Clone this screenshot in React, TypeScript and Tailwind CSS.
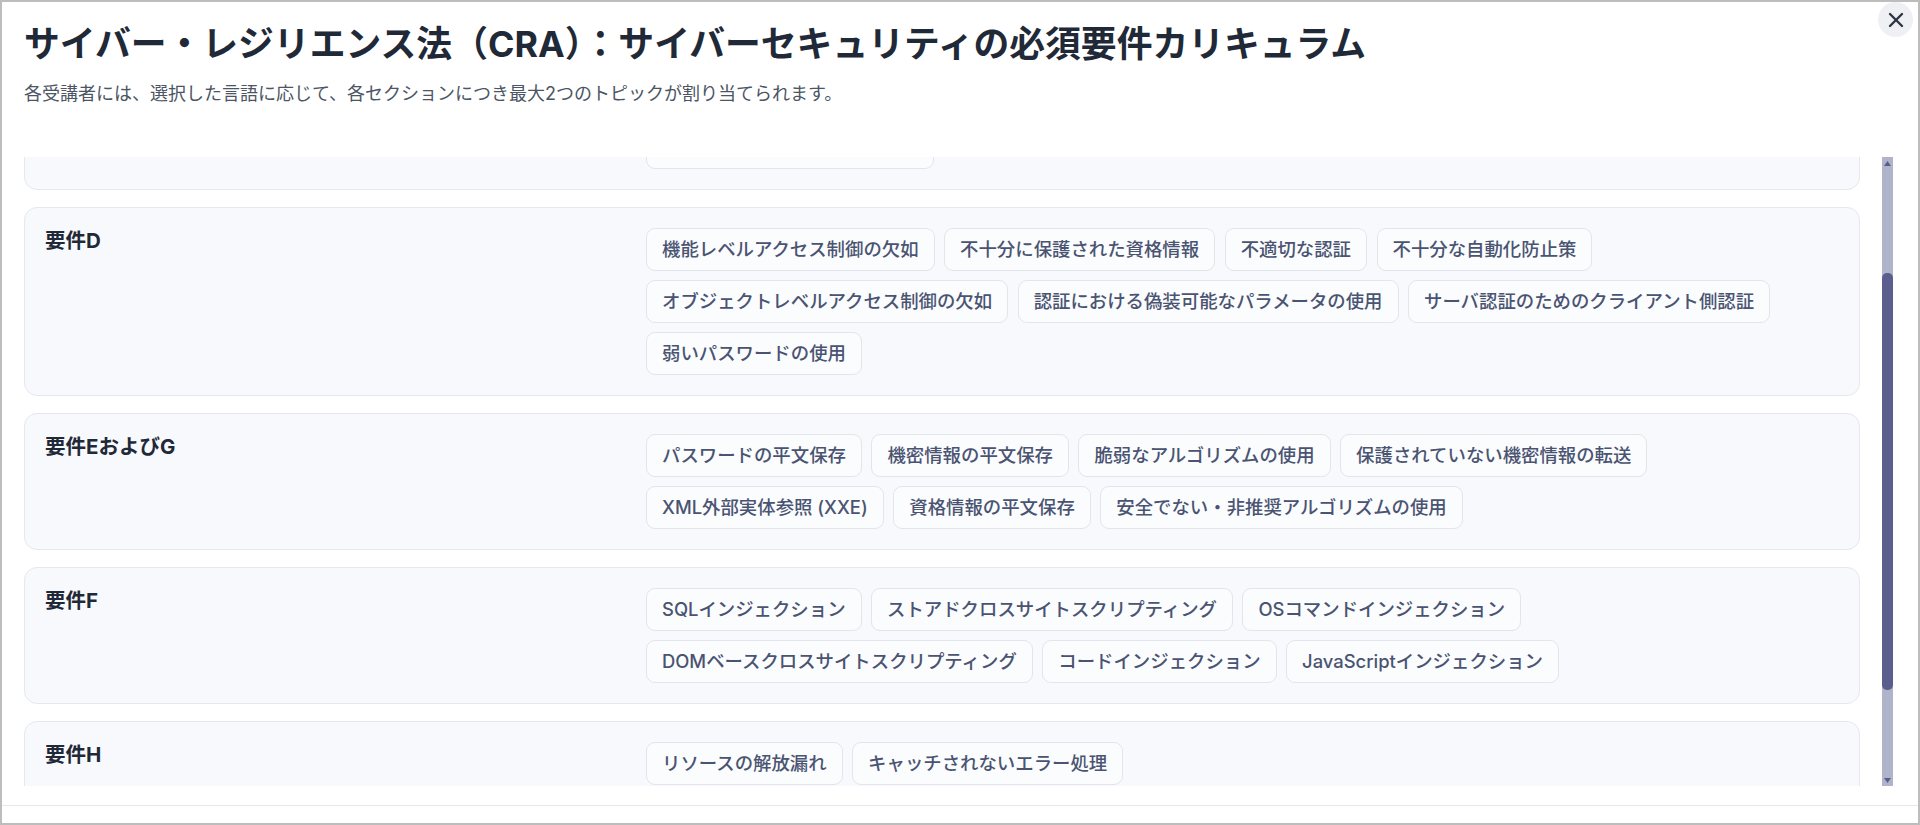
import React, { useLayoutEffect, useRef } from "react";
import { X } from "lucide-react";

type Section = { label: string; chips: string[] };

const sections: Section[] = [
  {
    label: "要件BおよびC",
    chips: [
      "サーバサイドリクエストフォージェリ (SSRF)",
      "パストラバーサル",
      "安全でないデシリアライゼーション",
      "オープンリダイレクト",
      "クロスサイトリクエストフォージェリ",
      "不適切な入力検証",
      "ファイルアップロードの不備",
      "クリックジャッキング",
      "不適切なエラーメッセージ処理",
    ],
  },
  {
    label: "要件D",
    chips: [
      "機能レベルアクセス制御の欠如",
      "不十分に保護された資格情報",
      "不適切な認証",
      "不十分な自動化防止策",
      "オブジェクトレベルアクセス制御の欠如",
      "認証における偽装可能なパラメータの使用",
      "サーバ認証のためのクライアント側認証",
      "弱いパスワードの使用",
    ],
  },
  {
    label: "要件EおよびG",
    chips: [
      "パスワードの平文保存",
      "機密情報の平文保存",
      "脆弱なアルゴリズムの使用",
      "保護されていない機密情報の転送",
      "XML外部実体参照 (XXE)",
      "資格情報の平文保存",
      "安全でない・非推奨アルゴリズムの使用",
    ],
  },
  {
    label: "要件F",
    chips: [
      "SQLインジェクション",
      "ストアドクロスサイトスクリプティング",
      "OSコマンドインジェクション",
      "DOMベースクロスサイトスクリプティング",
      "コードインジェクション",
      "JavaScriptインジェクション",
    ],
  },
  {
    label: "要件H",
    chips: ["リソースの解放漏れ", "キャッチされないエラー処理"],
  },
];

function Card({ section, cardRef }: { section: Section; cardRef?: React.Ref<HTMLDivElement> }) {
  return (
    <div
      ref={cardRef}
      className="grid grid-cols-3 gap-x-[9px] rounded-[13px] border border-[#e6e8ee] bg-[#f8f9fc] p-5"
    >
      <div className="text-[20.5px] font-bold leading-[26px] text-[#1f2937]">{section.label}</div>
      <div className="col-span-2 flex flex-wrap gap-x-[9.5px] gap-y-[9px]">
        {section.chips.map((c) => (
          <span
            key={c}
            className="rounded-[9px] border border-[#e2e5ec] bg-[#fbfcfd] px-[15px] py-[8px] text-[18.4px] font-medium leading-[25px] text-[#4a5472]"
          >
            {c}
          </span>
        ))}
      </div>
    </div>
  );
}

function FakeScrollbar() {
  return (
    <div className="flex h-full w-[11px] shrink-0 flex-col bg-[#b1b3ca]">
      <div className="flex h-[12px] items-center justify-center">
        <svg width="7" height="5" viewBox="0 0 7 5">
          <polygon points="3.5,0 7,5 0,5" fill="#5a5e8c" />
        </svg>
      </div>
      <div className="mt-[104px] h-[417px] rounded-[5px] bg-[#5a5e8c]" />
      <div className="flex-1" />
      <div className="flex h-[12px] items-center justify-center">
        <svg width="7" height="5" viewBox="0 0 7 5">
          <polygon points="0,0 7,0 3.5,5" fill="#5a5e8c" />
        </svg>
      </div>
    </div>
  );
}

export default function App() {
  const scrollRef = useRef<HTMLDivElement>(null);
  const targetRef = useRef<HTMLDivElement>(null);

  useLayoutEffect(() => {
    if (scrollRef.current && targetRef.current) {
      scrollRef.current.scrollTop = targetRef.current.offsetTop - 50;
    }
  }, []);

  return (
    <div className="relative box-border flex h-[825px] w-full flex-col overflow-hidden border-2 border-[#bdbdbd] bg-white font-['Inter','Noto_Sans_CJK_JP',sans-serif]">
      <button className="absolute right-[5px] top-0 flex h-[35px] w-[35px] items-center justify-center rounded-full bg-[#eef0f4] text-[#2f3745]">
        <X size={24} strokeWidth={2.4} />
      </button>

      <header className="h-[155px] shrink-0 px-[22px] pt-[19px]">
        <h1 className="text-[35.8px] font-bold leading-[46px] text-[#1f2937]">
          サイバー・レジリエンス法（CRA）：サイバーセキュリティの必須要件カリキュラム
        </h1>
        <p className="mt-[13px] text-[18px] leading-[28px] text-[#4b5563]">
          各受講者には、選択した言語に応じて、各セクションにつき最大2つのトピックが割り当てられます。
        </p>
      </header>

      <div className="flex h-[629px] shrink-0">
        <div ref={scrollRef} className="relative flex-1 overflow-hidden pl-[22px] pr-[22px]">
          <div className="flex flex-col gap-[17px] pb-[24px]">
            {sections.map((s, i) => (
              <Card key={s.label} section={s} cardRef={i === 1 ? targetRef : undefined} />
            ))}
          </div>
        </div>
        <FakeScrollbar />
        <div className="w-[25px] shrink-0" />
      </div>

      <div className="mt-[19px] flex-1 border-t border-[#e5e7eb]" />
    </div>
  );
}
